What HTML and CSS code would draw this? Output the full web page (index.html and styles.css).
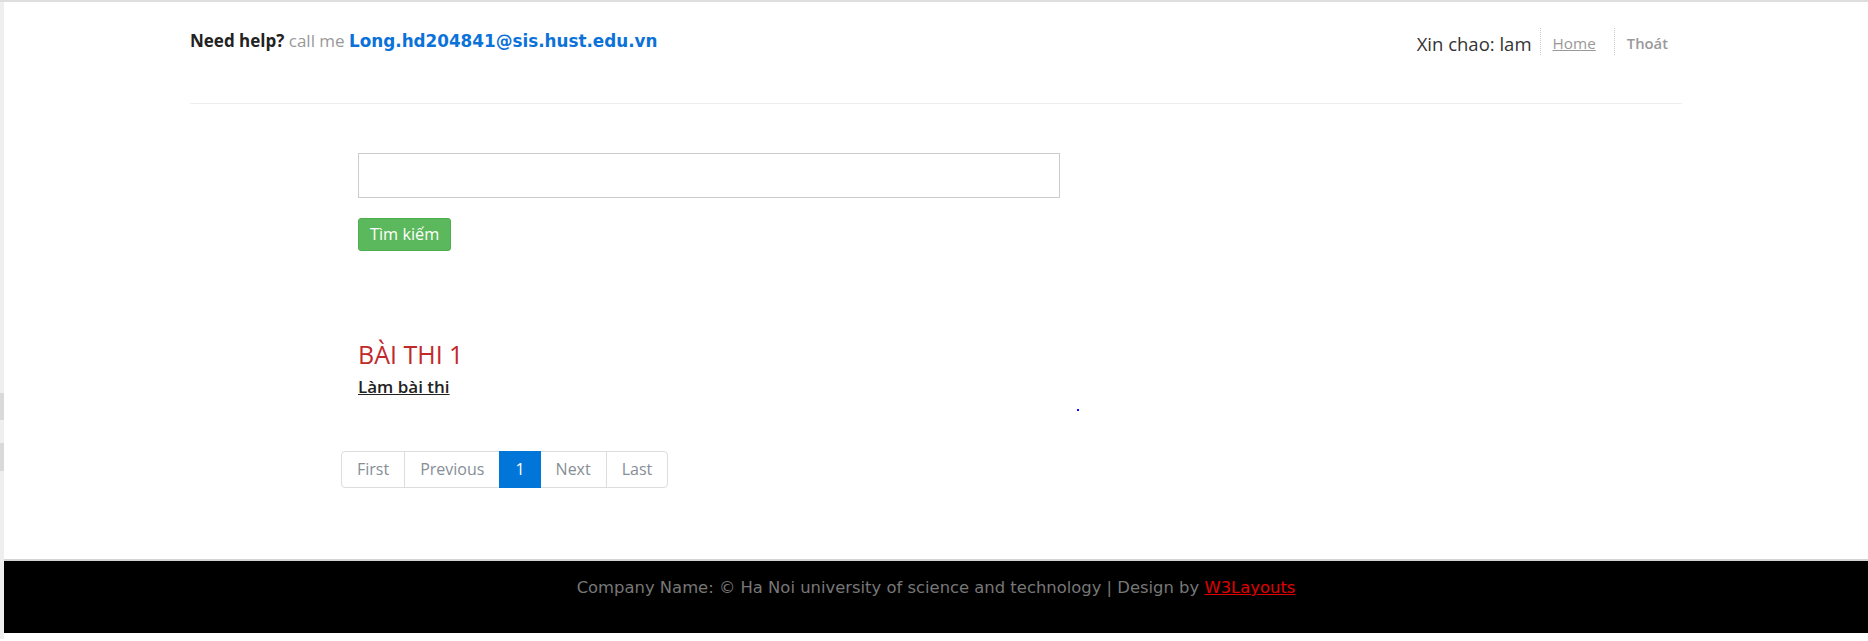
FILE: index.html
```html
<!DOCTYPE html>
<html lang="vi">
<head>
<meta charset="utf-8">
<title>Bài thi</title>
<link rel="stylesheet" href="styles.css">
</head>
<body>
<div class="page">
  <div class="edge"></div>
  <div class="main">
    <div class="container">
      <header class="topbar">
        <p class="help"><strong>Need help?</strong> <span class="call">call me</span> <a class="mail" href="#">Long.hd204841@sis.hust.edu.vn</a></p>
        <ul class="nav">
          <li class="greet">Xin chao: lam</li>
          <li class="sep home"><a href="#">Home</a></li>
          <li class="sep logout"><a href="#">Thoát</a></li>
        </ul>
      </header>
      <section class="content">
        <form class="search">
          <input class="search-input" type="text">
          <button class="search-btn" type="button">Tìm kiếm</button>
        </form>
        <h2 class="exam-title">BÀI THI 1</h2>
        <a class="exam-link" href="#">Làm bài thi</a>
        <div class="dot"></div>
        <ul class="pager">
          <li><a href="#">First</a></li>
          <li><a href="#">Previous</a></li>
          <li class="active"><a href="#">1</a></li>
          <li><a href="#">Next</a></li>
          <li><a href="#">Last</a></li>
        </ul>
      </section>
    </div>
    <footer class="footer">
      <p>Company Name: © Ha Noi university of science and technology | Design by <a href="#">W3Layouts</a></p>
    </footer>
  </div>
</div>
</body>
</html>
```

FILE: styles.css
```css
* { box-sizing: border-box; }
html, body { margin: 0; padding: 0; background: #fff; }
body { font-family: "Open Sans", "Noto Sans", sans-serif; color: #333; overflow: hidden; }

.page {
  display: flex;
  border-top: 2px solid #dedede;
  min-height: 639px;
}
.edge {
  width: 4px;
  flex: none;
  background: linear-gradient(to bottom,
    #efefef 0, #efefef 391px,
    #d9d9d9 391px, #d9d9d9 418px,
    #efefef 418px, #efefef 441px,
    #d9d9d9 441px, #d9d9d9 469px,
    #efefef 469px);
}
.main { flex: 1; display: flex; flex-direction: column; }

.container { width: 1492px; margin: 0 auto; }

.topbar {
  height: 102px;
  padding-top: 26px;
  border-bottom: 1px solid #eeeeee;
  display: flex;
  justify-content: space-between;
  align-items: flex-start;
}
.help {
  margin: 2px 0 0;
  font-size: 17px;
  line-height: 22px;
  color: #222;
}
.help strong { font-weight: 700; color: #222; }
.call { color: #999; }
.mail {
  font-family: "DejaVu Sans", Verdana, sans-serif;
  font-weight: 700;
  font-size: 16.8px;
  color: #0b72d9;
  text-decoration: none;
}

.nav {
  list-style: none;
  margin: 0;
  padding: 0;
  display: flex;
}
.nav li {
  height: 27px;
  padding-top: 2px;
  line-height: 27px;
}
.greet { font-size: 18.5px; color: #333; padding-right: 8px; }
.sep { border-left: 1px dotted #c8c8c8; }
.home { padding-left: 12px; padding-right: 18px; }
.logout { padding-left: 12px; padding-right: 14px; }
.nav a { color: #999; font-size: 15.3px; }
.home a { text-decoration: underline; }
.logout a { text-decoration: none; font-weight: 600; font-size: 14.8px; }

.content { padding-left: 168px; }

.search { margin: 0; padding-top: 49px; }
.search-input {
  display: block;
  width: 702px;
  height: 45px;
  border: 1px solid #cccccc;
  border-radius: 0;
  margin: 0;
  padding: 6px 12px;
  font-family: inherit;
  font-size: 16px;
}
.search-btn {
  display: block;
  margin-top: 20px;
  height: 33px;
  padding: 0 11px;
  background: #5cb85c;
  border: 1px solid #4cae4c;
  border-radius: 3px;
  color: #fff;
  font-family: "Open Sans", sans-serif;
  font-size: 16.3px;
  line-height: 31px;
}

.exam-title {
  margin: 89px 0 0;
  font-size: 25px;
  line-height: 29px;
  font-weight: 400;
  color: #c12a2a;
}
.exam-link {
  display: inline-block;
  margin-top: 6px;
  font-size: 17px;
  line-height: 24px;
  font-weight: 600;
  color: #222;
  text-decoration: underline;
}
.dot {
  width: 2px;
  height: 2px;
  margin: 10px 0 0 719px;
  background: #1010ff;
}

.pager {
  list-style: none;
  margin: 40px 0 0 -17px;
  padding: 0;
  display: flex;
}
.pager li a {
  display: block;
  height: 37px;
  padding: 0 15px;
  line-height: 35px;
  border: 1px solid #dddddd;
  margin-left: -1px;
  color: #868e96;
  font-size: 16px;
  text-decoration: none;
  background: #fff;
}
.pager li:first-child a { margin-left: 0; border-radius: 4px 0 0 4px; }
.pager li:last-child a { border-radius: 0 4px 4px 0; }
.pager li.active a {
  background: #0275d8;
  border-color: #0275d8;
  color: #fff;
  position: relative;
}

.footer {
  margin-top: 71px;
  border-top: 2px solid #d4d4d4;
  background: #000;
  padding: 16px 0 34px;
  text-align: center;
}
.footer p {
  margin: 0;
  font-family: "DejaVu Sans", Verdana, sans-serif;
  font-size: 16.4px;
  line-height: 22px;
  color: #777;
}
.footer a { color: #e00000; text-decoration: underline; }
```
